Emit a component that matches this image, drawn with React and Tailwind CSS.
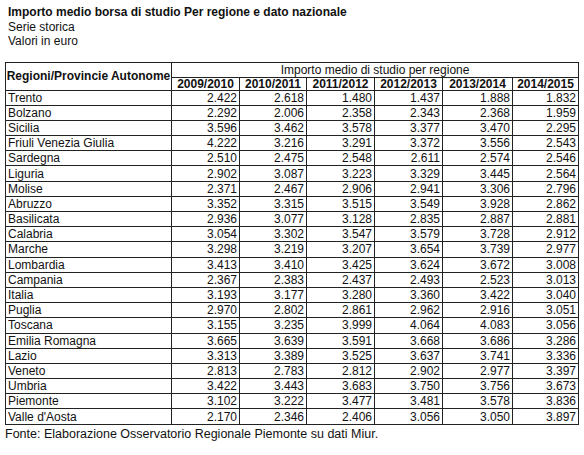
const years = ["2009/2010", "2010/2011", "2011/2012", "2012/2013", "2013/2014", "2014/2015"]

const rows = [
    ["Trento", "2.422", "2.618", "1.480", "1.437", "1.888", "1.832"],
    ["Bolzano", "2.292", "2.006", "2.358", "2.343", "2.368", "1.959"],
    ["Sicilia", "3.596", "3.462", "3.578", "3.377", "3.470", "2.295"],
    ["Friuli Venezia Giulia", "4.222", "3.216", "3.291", "3.372", "3.556", "2.543"],
    ["Sardegna", "2.510", "2.475", "2.548", "2.611", "2.574", "2.546"],
    ["Liguria", "2.902", "3.087", "3.223", "3.329", "3.445", "2.564"],
    ["Molise", "2.371", "2.467", "2.906", "2.941", "3.306", "2.796"],
    ["Abruzzo", "3.352", "3.315", "3.515", "3.549", "3.928", "2.862"],
    ["Basilicata", "2.936", "3.077", "3.128", "2.835", "2.887", "2.881"],
    ["Calabria", "3.054", "3.302", "3.547", "3.579", "3.728", "2.912"],
    ["Marche", "3.298", "3.219", "3.207", "3.654", "3.739", "2.977"],
    ["Lombardia", "3.413", "3.410", "3.425", "3.624", "3.672", "3.008"],
    ["Campania", "2.367", "2.383", "2.437", "2.493", "2.523", "3.013"],
    ["Italia", "3.193", "3.177", "3.280", "3.360", "3.422", "3.040"],
    ["Puglia", "2.970", "2.802", "2.861", "2.962", "2.916", "3.051"],
    ["Toscana", "3.155", "3.235", "3.999", "4.064", "4.083", "3.056"],
    ["Emilia Romagna", "3.665", "3.639", "3.591", "3.668", "3.686", "3.286"],
    ["Lazio", "3.313", "3.389", "3.525", "3.637", "3.741", "3.336"],
    ["Veneto", "2.813", "2.783", "2.812", "2.902", "2.977", "3.397"],
    ["Umbria", "3.422", "3.443", "3.683", "3.750", "3.756", "3.673"],
    ["Piemonte", "3.102", "3.222", "3.477", "3.481", "3.578", "3.836"],
    ["Valle d'Aosta", "2.170", "2.346", "2.406", "3.056", "3.050", "3.897"],
]

function App() {
    return (
        <div className='bg-white w-[584px] h-[455px] text-[#111] font-["Liberation_Sans",Arial,sans-serif] pt-[5px]'>
            <div className='pl-[8px] text-[12px] leading-[14.5px]'>
                <h1 className='font-bold'>Importo medio borsa di studio Per regione e dato nazionale</h1>
                <p>Serie storica</p>
                <p>Valori in euro</p>
            </div>

            <table className='mt-[13px] ml-[5px] w-[573px] table-fixed border-collapse text-[12px] leading-[12px]'>
                <colgroup>
                    <col className='w-[166px]' />
                    <col className='w-[68px]' />
                    <col className='w-[67px]' />
                    <col className='w-[68px]' />
                    <col className='w-[68px]' />
                    <col className='w-[70px]' />
                    <col className='w-[66px]' />
                </colgroup>
                <thead>
                    <tr className='h-[15px]'>
                        <th rowSpan={2} className='border border-[#222] font-bold text-center align-middle'>Regioni/Provincie Autonome</th>
                        <th colSpan={6} className='border border-[#222] font-normal text-center p-0'>Importo medio di studio per regione</th>
                    </tr>
                    <tr className='h-[13px]'>
                        {years.map((y) => (
                            <th key={y} className='border border-[#222] font-bold text-center p-0'>{y}</th>
                        ))}
                    </tr>
                </thead>
                <tbody>
                    {rows.map((r) => (
                        <tr key={r[0]} className='h-[15.2px]'>
                            <td className='border border-[#222] pl-[2px] p-0 whitespace-nowrap'>{r[0]}</td>
                            {r.slice(1).map((v, i) => (
                                <td key={i} className='border border-[#222] text-right pr-[2px] p-0'>{v}</td>
                            ))}
                        </tr>
                    ))}
                </tbody>
            </table>

            <p className='pl-[5px] text-[12.5px] leading-[14px] mt-[2px]'>Fonte: Elaborazione Osservatorio Regionale Piemonte su dati Miur.</p>
        </div>
    )
}

export default App
